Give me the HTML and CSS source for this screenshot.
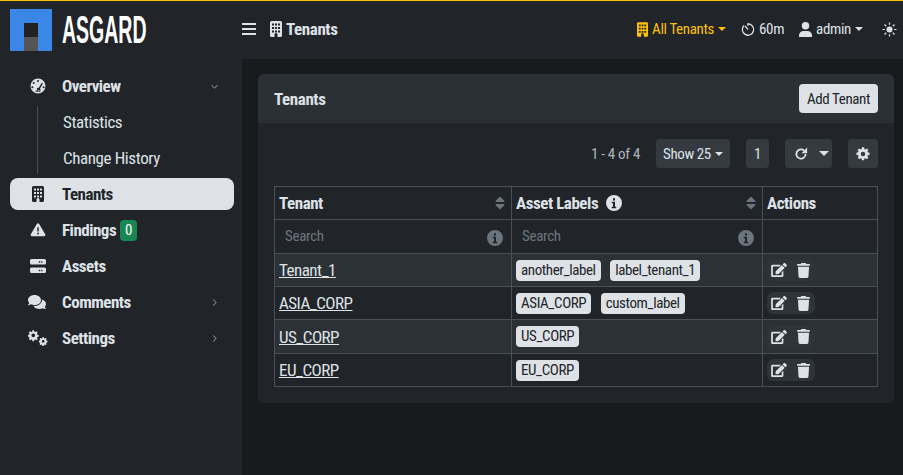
FILE: index.html
```html
<!DOCTYPE html>
<html lang="en">
<head>
    <meta charset="UTF-8">
    <meta name="viewport" content="width=device-width, initial-scale=1.0">
    <title>Tenants</title>
    <link rel="stylesheet" href="styles.css">
</head>
<body>
    <svg class="icon-defs" aria-hidden="true">
        <symbol id="i-building" viewBox="0 0 384 512"><path fill-rule="evenodd" d="M48 0h288a48 48 0 0 1 48 48v416a48 48 0 0 1-48 48h-96v-80a48 48 0 0 0-96 0v80H48a48 48 0 0 1-48-48V48A48 48 0 0 1 48 0zM64 80v64h64V80zm96 0v64h64V80zm96 0v64h64V80zM64 192v64h64v-64zm96 0v64h64v-64zm96 0v64h64v-64zM64 304v64h64v-64zm96 0v64h64v-64zm96 0v64h64v-64z"/></symbol>
        <symbol id="i-info" viewBox="0 0 512 512"><path fill-rule="evenodd" d="M256 0a256 256 0 1 1 0 512a256 256 0 0 1 0-512zm-32 104v72h64v-72zm-40 112v48h40v112h-40v48h144v-48h-40V216z"/></symbol>
        <symbol id="i-edit" viewBox="0 0 576 512"><path d="M402 83l90 90a10 10 0 0 1 0 14L274 405l-93 10a20 20 0 0 1-22-22l10-93L388 83a10 10 0 0 1 14 0zM564 60l-49-49a39 39 0 0 0-55 0l-35 35a10 10 0 0 0 0 14l90 90a10 10 0 0 0 14 0l35-35a39 39 0 0 0 0-55zM384 346v102H64V128h230a12 12 0 0 0 8-4l40-40c8-8 2-20-8-20H48a48 48 0 0 0-48 48v352a48 48 0 0 0 48 48h352a48 48 0 0 0 48-48V306c0-11-13-16-20-8l-40 40a12 12 0 0 0-4 8z"/></symbol>
        <symbol id="i-trash" viewBox="0 0 448 512"><path d="M135 18a32 32 0 0 1 29-18h120a32 32 0 0 1 29 18l7 14h96a32 32 0 0 1 0 64H32a32 32 0 0 1 0-64h96zM32 128h384l-21 339a48 48 0 0 1-48 45H101a48 48 0 0 1-48-45z"/></symbol>
        <symbol id="i-sort" viewBox="0 0 320 512"><path d="M41 288h238c21 0 32 26 17 41L177 448a24 24 0 0 1-34 0L24 329c-15-15-4-41 17-41zM296 183L177 64a24 24 0 0 0-34 0L24 183c-15 15-4 41 17 41h238c21 0 32-26 17-41z"/></symbol>
    </svg>

    <div class="app">
        <aside class="sidebar">
            <div class="brand">
                <span class="logo"><span class="logo-door"></span></span>
                <span class="brand-name">ASGARD</span>
            </div>
            <nav class="side-nav">
                <a class="side-link">
                    <svg class="side-icon" viewBox="0 0 512 512"><path fill-rule="evenodd" d="M256 16a240 240 0 1 1 0 480a240 240 0 0 1 0-480zM256 64a32 32 0 1 0 0 64a32 32 0 0 0 0-64zM120 128a32 32 0 1 0 0 64a32 32 0 0 0 0-64zM76 264a32 32 0 1 0 0 64a32 32 0 0 0 0-64zM436 264a32 32 0 1 0 0 64a32 32 0 0 0 0-64zM375 150l-92 160a56 56 0 1 0 38 24l92-162zM180 400h152v40H180z"/></svg>
                    <span>Overview</span>
                    <svg class="side-caret" viewBox="0 0 12 12"><path d="M2 4.500l4 3.500 4-3.500" /></svg>
                </a>
                <div class="side-sub">
                    <a class="sub-link">Statistics</a>
                    <a class="sub-link">Change History</a>
                </div>
                <a class="side-link active">
                    <svg class="side-icon"><use href="#i-building"/></svg>
                    <span>Tenants</span>
                </a>
                <a class="side-link">
                    <svg class="side-icon" viewBox="0 0 576 512"><path fill-rule="evenodd" d="M288 16c18 0 34 10 43 25l216 368c9 15 9 34 0 49s-25 22-43 22H72c-18 0-34-8-43-23s-9-33 0-48L245 41c9-15 25-25 43-25zM262 160v150h52V160zm26 190a32 32 0 1 0 0 64a32 32 0 0 0 0-64z"/></svg>
                    <span>Findings</span>
                    <span class="count-badge">0</span>
                </a>
                <a class="side-link">
                    <svg class="side-icon" viewBox="0 0 512 512"><path fill-rule="evenodd" d="M48 32h416a48 48 0 0 1 48 48v80a48 48 0 0 1-48 48H48a48 48 0 0 1-48-48V80a48 48 0 0 1 48-48zm352 96a24 24 0 1 0 0 .1zm-72 0a24 24 0 1 0 0 .1zM48 304h416a48 48 0 0 1 48 48v80a48 48 0 0 1-48 48H48a48 48 0 0 1-48-48v-80a48 48 0 0 1 48-48zm352 96a24 24 0 1 0 0 .1zm-72 0a24 24 0 1 0 0 .1z"/></svg>
                    <span>Assets</span>
                </a>
                <a class="side-link">
                    <svg class="side-icon wide" viewBox="0 0 640 512"><path d="M416 192c0-88-93-160-208-160S0 104 0 192c0 34 14 66 38 92-13 30-35 54-35 54-3 3-4 8-2 12s5 6 9 6c36 0 66-12 88-25 33 16 71 25 110 25 115 0 208-72 208-164zm122 220c24-26 38-58 38-92 0-67-54-125-130-148 1 7 1 13 1 20 0 106-108 192-240 192-11 0-21-1-32-2 32 57 106 98 193 98 39 0 77-9 110-25 22 13 52 25 88 25 4 0 7-2 9-6s1-9-2-12c0 0-22-24-35-50z"/></svg>
                    <span>Comments</span>
                    <svg class="side-caret" viewBox="0 0 12 12"><path d="M4.500 2l3.500 4-3.500 4"/></svg>
                </a>
                <a class="side-link">
                    <svg class="side-icon wide" viewBox="0 0 640 512"><path fill-rule="evenodd" d="M200 30h56l8 44 30 13 37-26 40 40-26 37 13 30 44 8v56l-44 8-13 30 26 37-40 40-37-26-30 13-8 44h-56l-8-44-30-13-37 26-40-40 26-37-13-30-44-8v-56l44-8 13-30-26-37 40-40 37 26 30-13zM228 130a60 60 0 1 0 0 120a60 60 0 0 0 0-120z" transform="translate(-60 -20)"/><path fill-rule="evenodd" d="M480 250h48l6 32 24 10 27-18 34 34-18 27 10 24 32 6v48l-32 6-10 24 18 27-34 34-27-18-24 10-6 32h-48l-6-32-24-10-27 18-34-34 18-27-10-24-32-6v-48l32-6 10-24-18-27 34-34 27 18 24-10zM504 336a45 45 0 1 0 0 90a45 45 0 0 0 0-90z" transform="translate(-20 -20)"/></svg>
                    <span>Settings</span>
                    <svg class="side-caret" viewBox="0 0 12 12"><path d="M4.500 2l3.500 4-3.500 4"/></svg>
                </a>
            </nav>
        </aside>

        <div class="content">
            <header class="topbar">
                <svg class="burger" viewBox="0 0 14 12"><path d="M0 0h14v2H0zM0 5h14v2H0zM0 10h14v2H0z"/></svg>
                <svg class="top-building"><use href="#i-building"/></svg>
                <span class="page-title">Tenants</span>
                <div class="top-right">
                    <span class="top-item tenant-pick">
                        <svg class="top-icon"><use href="#i-building"/></svg>All Tenants<i class="caret"></i>
                    </span>
                    <span class="top-item timer">
                        <svg class="top-icon round" viewBox="0 0 16 16"><path d="M8 1.500a6.500 6.500 0 1 1-4.600 1.900" fill="none" stroke="currentColor" stroke-width="1.500"/><path d="M8 8L4.600 3.900" stroke="currentColor" stroke-width="1.500"/><rect x="7.200" y="0.800" width="1.500" height="3"/></svg>60m
                    </span>
                    <span class="top-item user">
                        <svg class="top-icon" viewBox="0 0 14 16"><circle cx="7" cy="4" r="4"/><path d="M0 16v-1.500a5 5 0 0 1 5-5h4a5 5 0 0 1 5 5V16z"/></svg>admin<i class="caret"></i>
                    </span>
                    <svg class="sun" viewBox="0 0 16 16"><circle cx="8" cy="8" r="3.200"/><path d="M8 .5v2.500M8 13v2.500M.5 8H3M13 8h2.500M2.700 2.700l1.800 1.800M11.500 11.500l1.800 1.800M2.700 13.300l1.800-1.800M11.500 4.500l1.800-1.800" stroke="currentColor" stroke-width="1.300"/></svg>
                </div>
            </header>

            <main class="main">
                <section class="card">
                    <div class="card-head">
                        <span class="card-title">Tenants</span>
                        <button class="btn-light">Add Tenant</button>
                    </div>
                    <div class="card-body">
                        <div class="table-tools">
                            <span class="page-info">1 - 4 of 4</span>
                            <span class="tool-btn show-btn">Show 25<i class="caret"></i></span>
                            <span class="tool-btn page-btn">1</span>
                            <span class="tool-btn refresh-btn">
                                <svg class="refresh" viewBox="0 0 16 16"><path d="M13.300 8a5.300 5.300 0 1 1-1.700-3.900" fill="none" stroke="currentColor" stroke-width="2"/><path d="M15 .5v6.500H8.500z"/></svg>
                                <i class="caret big"></i>
                            </span>
                            <span class="tool-btn gear-btn">
                                <svg class="gear" viewBox="0 0 512 512"><path fill-rule="evenodd" d="M216 10h80l12 62 36 15 52-36 57 57-36 52 15 36 62 12v80l-62 12-15 36 36 52-57 57-52-36-36 15-12 62h-80l-12-62-36-15-52 36-57-57 36-52-15-36-62-12v-80l62-12 15-36-36-52 57-57 52 36 36-15zM256 176a80 80 0 1 0 0 160a80 80 0 0 0 0-160z"/></svg>
                            </span>
                        </div>

                        <table class="data-table">
                            <colgroup>
                                <col class="col-tenant"><col class="col-labels"><col class="col-actions">
                            </colgroup>
                            <thead>
                                <tr class="head-row">
                                    <th><div class="th-inner"><span>Tenant</span><svg class="sort"><use href="#i-sort"/></svg></div></th>
                                    <th><div class="th-inner"><span>Asset Labels</span><svg class="info-white"><use href="#i-info"/></svg><svg class="sort"><use href="#i-sort"/></svg></div></th>
                                    <th>Actions</th>
                                </tr>
                                <tr class="filter-row">
                                    <td><div class="filter"><span>Search</span><svg class="info-grey"><use href="#i-info"/></svg></div></td>
                                    <td><div class="filter"><span>Search</span><svg class="info-grey"><use href="#i-info"/></svg></div></td>
                                    <td></td>
                                </tr>
                            </thead>
                            <tbody>
                                <tr class="striped">
                                    <td><a class="tenant-link">Tenant_1</a></td>
                                    <td><div class="labels"><span class="tag">another_label</span><span class="tag">label_tenant_1</span></div></td>
                                    <td><span class="row-actions"><svg class="act-edit"><use href="#i-edit"/></svg><svg class="act-trash"><use href="#i-trash"/></svg></span></td>
                                </tr>
                                <tr>
                                    <td><a class="tenant-link">ASIA_CORP</a></td>
                                    <td><div class="labels"><span class="tag">ASIA_CORP</span><span class="tag">custom_label</span></div></td>
                                    <td><span class="row-actions"><svg class="act-edit"><use href="#i-edit"/></svg><svg class="act-trash"><use href="#i-trash"/></svg></span></td>
                                </tr>
                                <tr class="striped tall">
                                    <td><a class="tenant-link">US_CORP</a></td>
                                    <td><div class="labels"><span class="tag">US_CORP</span></div></td>
                                    <td><span class="row-actions"><svg class="act-edit"><use href="#i-edit"/></svg><svg class="act-trash"><use href="#i-trash"/></svg></span></td>
                                </tr>
                                <tr>
                                    <td><a class="tenant-link">EU_CORP</a></td>
                                    <td><div class="labels"><span class="tag">EU_CORP</span></div></td>
                                    <td><span class="row-actions"><svg class="act-edit"><use href="#i-edit"/></svg><svg class="act-trash"><use href="#i-trash"/></svg></span></td>
                                </tr>
                            </tbody>
                        </table>
                    </div>
                </section>
            </main>
        </div>
    </div>
</body>
</html>
```

FILE: styles.css
```css
* {
    box-sizing: border-box;
}

html, body {
    margin: 0;
    height: 100%;
}

body {
    font-family: Roboto, "Liberation Sans", sans-serif;
    font-stretch: 75%;
    font-size: 15px;
    letter-spacing: -0.3px;
    color: #dee2e6;
    background-color: #181a1e;
    overflow: hidden;
}

svg {
    fill: currentColor;
    flex-shrink: 0;
}

.icon-defs {
    display: none;
}

.app {
    display: flex;
    height: 100%;
    border-top: 1px solid #ffc107;
}

/* Sidebar */
.sidebar {
    width: 242px;
    background-color: #212529;
    padding: 0 8px 0 10px;
}

.brand {
    display: flex;
    align-items: center;
    height: 58px;
    gap: 10px;
}

.logo {
    display: flex;
    justify-content: center;
    align-items: flex-end;
    width: 42px;
    height: 42px;
    background-color: #3b87e8;
}

.logo-door {
    width: 14px;
    height: 28px;
    background: linear-gradient(#222 50%, #555 50%);
}

.brand-name {
    font-family: "Liberation Sans", sans-serif;
    font-size: 39px;
    font-weight: 700;
    letter-spacing: 0;
    color: #fff;
    display: inline-block;
    transform: scaleX(0.5);
    transform-origin: left center;
}

.side-nav {
    margin-top: 11px;
}

.side-link {
    display: flex;
    align-items: center;
    height: 32px;
    margin-bottom: 4px;
    padding-left: 52px;
    position: relative;
    font-size: 17px;
    font-weight: 700;
    letter-spacing: -0.5px;
    border-radius: 8px;
}

.side-link.active {
    background-color: #dee2e6;
    color: #212529;
}

.side-icon {
    position: absolute;
    left: 20px;
    width: 16px;
    height: 16px;
}

.side-icon.wide {
    left: 18px;
    width: 20px;
}

.side-caret {
    position: absolute;
    right: 15px;
    width: 9px;
    height: 9px;
    fill: none;
    stroke: #adb5bd;
    stroke-width: 1.2;
}

.count-badge {
    margin-left: 4px;
    padding: 0 5px;
    line-height: 21px;
    font-size: 15px;
    font-weight: 400;
    background-color: #198754;
    color: #fff;
    border-radius: 4px;
}

.side-sub {
    margin-left: 27px;
    border-left: 1px solid #495057;
    margin-bottom: 4px;
}

.sub-link {
    display: flex;
    align-items: center;
    height: 32px;
    margin-bottom: 4px;
    padding-left: 25px;
    font-size: 17px;
    letter-spacing: -0.4px;
}

.sub-link:last-child {
    margin-bottom: 0;
}

/* Top bar */
.content {
    flex: 1;
    display: flex;
    flex-direction: column;
    min-width: 0;
}

.topbar {
    display: flex;
    align-items: center;
    height: 58px;
    background-color: #212529;
    padding: 0 6px 2px 0;
}

.burger {
    width: 14px;
    height: 12px;
    margin-right: 14px;
}

.top-building {
    width: 12px;
    height: 16px;
    margin-right: 4px;
}

.page-title {
    font-size: 17px;
    font-weight: 700;
    letter-spacing: -0.4px;
}

.top-right {
    margin-left: auto;
    display: flex;
    align-items: center;
}

.top-item {
    display: flex;
    align-items: center;
    font-size: 15px;
    letter-spacing: -0.35px;
    margin-right: 15px;
}

.top-icon {
    width: 11px;
    height: 15px;
    margin-right: 4px;
}

.top-icon.round {
    width: 14px;
    height: 15px;
}

.user .top-icon {
    width: 13px;
    height: 15px;
}

.tenant-pick {
    color: #ffc107;
}

.user {
    margin-right: 19px;
}

.caret {
    display: inline-block;
    margin-left: 4px;
    border-top: 4px solid currentColor;
    border-left: 4px solid transparent;
    border-right: 4px solid transparent;
}

.sun {
    width: 15px;
    height: 15px;
}

/* Card */
.main {
    flex: 1;
    padding: 15px 9px 0 16px;
}

.card {
    border-radius: 6px;
    background-color: #212529;
    height: 329px;
    overflow: hidden;
}

.card-head {
    display: flex;
    align-items: center;
    justify-content: space-between;
    height: 49px;
    padding: 0 16px;
    background-color: #2b3035;
}

.card-title {
    font-size: 17px;
    font-weight: 700;
    letter-spacing: -0.4px;
}

.btn-light {
    width: 79px;
    height: 29px;
    padding: 0;
    font: inherit;
    font-size: 15px;
    letter-spacing: -0.4px;
    color: #212529;
    background-color: #dee2e6;
    border: none;
    border-radius: 4px;
}

.card-body {
    padding: 16px;
}

.table-tools {
    display: flex;
    align-items: center;
    justify-content: flex-end;
    height: 29px;
    margin-bottom: 18px;
}

.page-info {
    margin-right: 16px;
    color: #adb5bd;
}

.tool-btn {
    display: flex;
    align-items: center;
    justify-content: center;
    height: 29px;
    background-color: #343a40;
    color: #dee2e6;
    border-radius: 4px;
}

.show-btn {
    width: 74px;
    margin-right: 16px;
    letter-spacing: -0.4px;
}

.page-btn {
    width: 23px;
    margin-right: 16px;
}

.refresh-btn {
    justify-content: flex-start;
    width: 47px;
    margin-right: 16px;
    padding-left: 9px;
}

.refresh {
    width: 14px;
    height: 14px;
}

.caret.big {
    margin-left: 11px;
    border-top-width: 5px;
    border-left-width: 5px;
    border-right-width: 5px;
}

.gear-btn {
    width: 30px;
}

.gear {
    width: 14px;
    height: 14px;
}

/* Table */
.data-table {
    width: 603px;
    table-layout: fixed;
    border-collapse: collapse;
}

.col-tenant { width: 237px; }
.col-labels { width: 251px; }
.col-actions { width: 115px; }

.data-table th,
.data-table td {
    border: 1px solid #495057;
    padding: 0 4px;
    text-align: left;
    height: 33px;
}

.head-row th {
    font-size: 17px;
    font-weight: 700;
    letter-spacing: -0.45px;
}

.th-inner {
    display: flex;
    align-items: center;
}

.sort {
    width: 10px;
    height: 16px;
    margin-left: auto;
    margin-right: 2px;
    color: #6c757d;
}

.info-white {
    width: 16px;
    height: 16px;
    margin-left: 8px;
}

.data-table .filter-row td {
    height: 34px;
    color: #6c757d;
}

.filter {
    display: flex;
    align-items: center;
    justify-content: space-between;
    padding: 0 4px 0 6px;
    line-height: 16px;
}

.filter span {
    margin-bottom: 1px;
}

.info-grey {
    width: 16px;
    height: 16px;
    margin-top: 2px;
}

.striped {
    background-color: #2c3136;
}

.data-table .tall td {
    height: 34px;
}

.tenant-link {
    font-size: 17px;
    letter-spacing: -0.5px;
    text-decoration: underline;
    color: #dee2e6;
}

.labels {
    display: flex;
    gap: 9.5px;
}

.tag {
    padding: 0 5px;
    line-height: 21px;
    letter-spacing: -0.4px;
    color: #212529;
    background-color: #dee2e6;
    border-radius: 4px;
}

.row-actions {
    display: flex;
    align-items: center;
    gap: 10px;
    width: fit-content;
    height: 22px;
    padding: 0 5px 0 4px;
    background-color: #2f343a;
    border-radius: 6px;
}

.act-edit {
    width: 16px;
    height: 14px;
}

.act-trash {
    width: 13px;
    height: 15px;
}
```
